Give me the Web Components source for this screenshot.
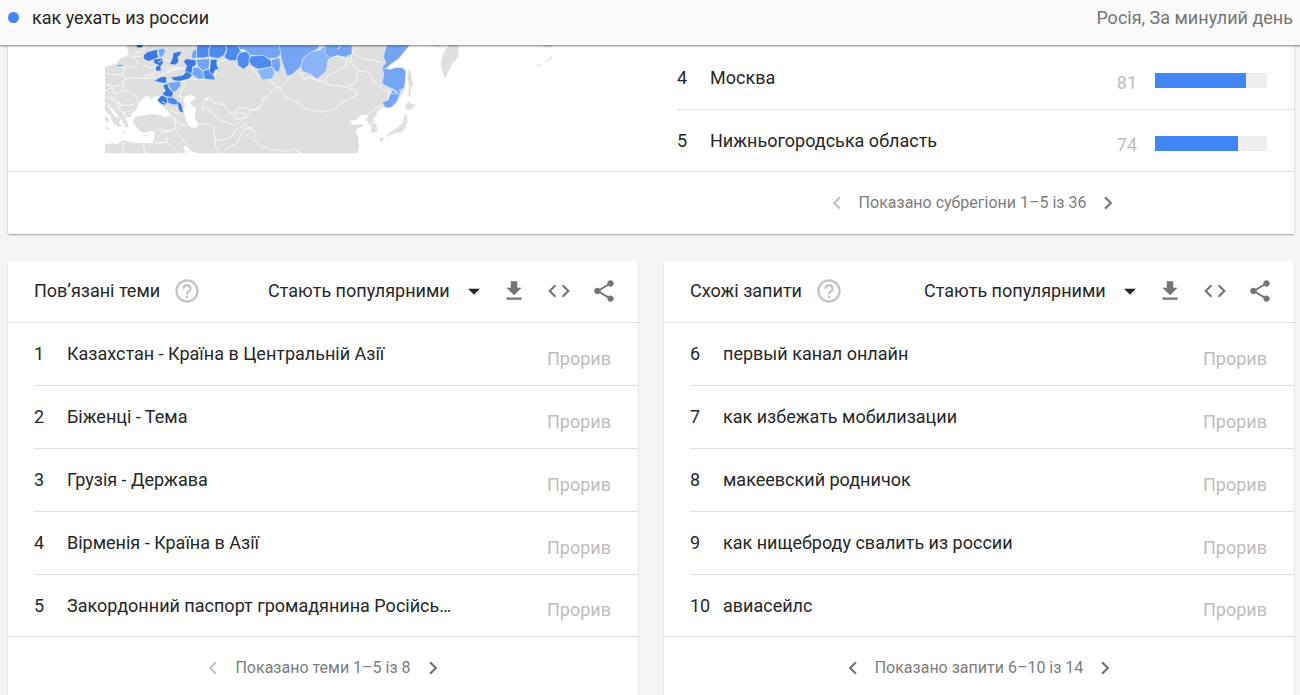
<!DOCTYPE html>
<html lang="uk">
<head>
<meta charset="utf-8">
<meta name="viewport" content="width=device-width, initial-scale=1">
<title>Google Trends</title>
<style>
  body { margin: 0; background: #f5f5f5; color: #262626; font: 18px/24px Roboto, "Noto Sans", sans-serif; }
</style>
</head>
<body>
<trends-page></trends-page>

<script>
const define = (name, html, setup) => {
  const template = document.createElement('template');
  template.innerHTML = html;
  customElements.define(name, class extends HTMLElement {
    connectedCallback() {
      if (this.shadowRoot) return;
      this.attachShadow({ mode: 'open' }).append(template.content.cloneNode(true));
      if (setup) setup(this, this.shadowRoot);
    }
  });
};

const ICONS = {
  download: 'M19 9h-4V3H9v6H5l7 7 7-7zM5 18v2h14v-2H5z',
  code: 'M9.4 16.6 4.8 12l4.6-4.6L8 6l-6 6 6 6 1.400-1.400zm5.200 0 4.600-4.600-4.600-4.600L16 6l6 6-6 6-1.400-1.400z',
  share: 'M18 16.080c-.76 0-1.440.3-1.960.77L8.910 12.700c.05-.23.09-.46.09-.7s-.04-.47-.09-.7l7.050-4.110c.54.5 1.250.81 2.040.81 1.660 0 3-1.340 3-3s-1.340-3-3-3-3 1.340-3 3c0 .24.04.47.09.7L8.040 9.810C7.500 9.310 6.790 9 6 9c-1.660 0-3 1.340-3 3s1.340 3 3 3c.79 0 1.500-.31 2.040-.81l7.120 4.160c-.05.21-.08.43-.08.65 0 1.610 1.310 2.920 2.920 2.920s2.920-1.310 2.920-2.920-1.310-2.920-2.920-2.920z',
  help: 'M11 18h2v-2h-2v2zm1-16C6.480 2 2 6.480 2 12s4.480 10 10 10 10-4.480 10-10S17.520 2 12 2zm0 18c-4.410 0-8-3.590-8-8s3.590-8 8-8 8 3.590 8 8-3.590 8-8 8zm0-14c-2.210 0-4 1.790-4 4h2c0-1.100.9-2 2-2s2 .9 2 2c0 2-3 1.750-3 5h2c0-2.250 3-2.500 3-5 0-2.210-1.790-4-4-4z',
  prev: 'M15.410 7.410 14 6l-6 6 6 6 1.410-1.410L10.830 12z',
  next: 'M10 6 8.590 7.410 13.170 12l-4.580 4.590L10 18l6-6z',
  drop: 'M6.500 10l5.500 5.500 5.500-5.500z'
};

define('trend-icon', `
  <style>
    :host { display: block; width: 26px; height: 26px; }
    svg { display: block; width: 100%; height: 100%; fill: currentColor; }
  </style>
  <svg viewBox="0 0 24 24" aria-hidden="true"><path/></svg>`,
  (host, root) => root.querySelector('path').setAttribute('d', ICONS[host.getAttribute('name')]));

define('icon-button', `
  <style>
    :host { display: block; color: #757575; }
    :host([muted]) { color: #c4c4c4; }
    button { display: block; padding: 0; border: 0; background: none; color: inherit; cursor: pointer; }
  </style>
  <button type="button"></button>`,
  (host, root) => {
    const button = root.querySelector('button');
    button.setAttribute('aria-label', host.getAttribute('label'));
    const icon = document.createElement('trend-icon');
    icon.setAttribute('name', host.getAttribute('name'));
    if (host.getAttribute('name') === 'help') icon.style.cssText = 'width:28px;height:28px';
    button.append(icon);
  });

define('query-bar', `
  <style>
    :host { position: sticky; top: 0; z-index: 1; display: flex; align-items: center; box-sizing: border-box;
      height: 45px; padding: 0 7px 10px 8px; background: #fafafa; box-shadow: 0 1px 2px rgba(0,0,0,.5); }
    i { flex: none; width: 11px; height: 11px; margin-right: 13px; border-radius: 50%; background: #4285f4; }
    .scope { margin-left: auto; color: #757575; }
  </style>
  <i></i><slot></slot><span class="scope"><slot name="scope"></slot></span>`);

define('trend-row', `
  <style>
    :host { display: flex; align-items: center; box-sizing: border-box; height: 63px; margin-left: 26px;
      padding-right: 27px; border-bottom: 1px solid #e0e0e0; }
    :host(:last-of-type) { height: 61px; border-bottom: 0; }
    .rank { flex: none; width: 33px; }
    .name { flex: 1; min-width: 0; overflow: hidden; white-space: nowrap; text-overflow: ellipsis; }
    .value { padding-top: 9px; color: #bdbdbd; }
    .bar { width: 112px; height: 15px; margin: 5px 0 0 18px; background: #eee; }
    .bar div { height: 100%; background: #4285f4; }
  </style>
  <span class="rank"></span><span class="name"><slot></slot></span><span class="value"></span>`,
  (host, root) => {
    host.setAttribute('role', 'listitem');
    const value = host.getAttribute('value');
    root.querySelector('.rank').textContent = host.getAttribute('rank');
    root.querySelector('.value').textContent = value;
    if (host.hasAttribute('bar')) {
      const bar = document.createElement('div');
      bar.className = 'bar';
      bar.append(document.createElement('div'));
      bar.firstChild.style.width = value + '%';
      root.append(bar);
    }
  });

define('trend-pager', `
  <style>
    :host { display: flex; align-items: center; justify-content: center; gap: 9px; height: 62px;
      border-top: 1px solid #e0e0e0; color: #7d7d7d; font-size: 16px; }
    :host([half]) { padding-left: 50%; }
  </style>
  <icon-button class="prev" name="prev" label="Назад"></icon-button>
  <span><slot></slot></span>
  <icon-button name="next" label="Далі"></icon-button>`,
  (host, root) => {
    if (host.hasAttribute('first')) root.querySelector('.prev').setAttribute('muted', '');
  });

define('trend-card', `
  <style>
    :host { display: block; background: #fff; border-radius: 2px; box-shadow: 0 1px 2px rgba(0,0,0,.2); }
    header { display: flex; align-items: center; box-sizing: border-box; height: 62px; padding: 0 21px 2px 26px;
      border-bottom: 1px solid #e0e0e0; }
    h2 { margin: 0 13px 0 0; font: inherit; white-space: nowrap; }
    label { display: grid; align-items: center; margin: 0 14px 0 auto; }
    select { grid-area: 1 / 1; appearance: none; margin: 0; padding: 0 37px 0 0; border: 0; background: none;
      color: inherit; font: inherit; }
    label trend-icon { grid-area: 1 / 1; justify-self: end; pointer-events: none; }
    nav { display: flex; gap: 19px; }
  </style>
  <header>
    <h2></h2>
    <icon-button name="help" label="Довідка" muted></icon-button>
    <label>
      <select aria-label="Сортування"><option>Стають популярними</option></select>
      <trend-icon name="drop"></trend-icon>
    </label>
    <nav>
      <icon-button name="download" label="Завантажити"></icon-button>
      <icon-button name="code" label="Вставити"></icon-button>
      <icon-button name="share" label="Поділитися"></icon-button>
    </nav>
  </header>
  <div role="list"><slot></slot></div>
  <slot name="pager"></slot>`,
  (host, root) => root.querySelector('h2').textContent = host.getAttribute('heading'));

define('region-map', `
  <style>
    :host { display: block; }
    svg { display: block; width: 455px; max-width: 100%; }
    .land { fill: #dfdfdf; }
    .sea { fill: #fff; }
    .line { fill: none; stroke: #f8f8f8; stroke-width: 3; stroke-linejoin: round; }
    .area path { stroke: #dbe8fd; stroke-width: 2; stroke-linejoin: round; }
    .a { fill: #174ea6; } .b { fill: #3b78dc; } .c { fill: #4f8bee; } .d { fill: #74a5f5; } .e { fill: #8ab4f8; }
  </style>
  <svg viewBox="45 27 1365 326" role="img" aria-label="Популярність за субрегіонами">
    <g class="land">
      <path d="M45 27H960L925 68 895 92 885 102 900 112 912 95 930 95 945 100 948 125 944 158 930 185 915 205 895 217 878 214 862 226 862 234 848 250 858 264 864 284 848 292 842 286 846 272 836 264 828 250 836 240 824 236 812 238 798 252 778 255 790 268 812 264 822 268 800 280 798 292 806 304 804 316 808 332 802 352H322L304 346 290 330 281 330 286 352H45V326L66 322 80 324 100 312 130 320 162 322 188 322 194 304 195 288 184 284 165 290 150 286 134 268 128 252 136 242 160 238 184 234 205 236 225 244 243 238 232 226 212 210 196 200 184 206 168 196 152 204 138 222 124 234 122 244 104 244 112 256 116 276 104 272 98 258 88 244 78 230 68 218 52 206 66 230 76 242 66 244 52 232 45 222Z"/>
      <path d="M1077 27h28l-1 18 4 9-8 15-14 14-8 18-13 26-6-17-6-14 2-28 8-22zM955 100l7 8 3 22 6 18-8 8-2 26-6-2 2-30-4-24zM946 206l10-10 8 8 14 2-8 9-12 7-10-4zM942 238l9-2 1 22-7 18-10 12-16 3-16 5-9-4 18-10 16-12 10-10zM870 304l12 2-6 15-6-7zM888 298l16-4-8 9zM1020 27h28v5l-16-2zM1338 88l14-4 2 3-12 4zM1360 80l14-9 14-14-3 10-14 10zM1358 27h26v8l-26-4z"/>
      <path d="M1342 27h4v3zM1250 118h4v3zM1264 118h4v3zM1122 68h3v3z"/>
    </g>
    <g class="sea">
      <path d="M45 27H108L116 48 108 62 92 66 78 84 58 88 45 92Z"/>
      <path d="M138 222 150 196 162 182 178 180 182 190 198 178 208 184 200 196 214 208 232 224 242 238 224 240 200 230 184 234 160 236 146 236Z"/>
      <path d="M284 182 300 177 316 182 313 192 300 196 308 212 318 216 316 232 314 248 324 262 320 276 302 274 290 258 286 240 278 222 286 210 280 194Z"/>
      <path d="M45 228 64 240 76 262 96 274 120 280 138 276 160 292 184 286 196 292 186 320 156 318 128 316 100 308 78 320 58 316 45 318Z"/>
      <path d="M342 190 352 184 358 188 350 194Z"/>
    </g>
    <g class="land"><path d="M70 262 62 244 74 242 92 248 88 262 98 274 80 270zM92 288l14 2-2 4zM158 298l16-4-8 8zM45 236l14 18-6 6-8-8zM46 272l12 4-2 6-10-4z"/></g>
    <g class="line">
      <path d="M112 58 132 64 145 80 132 94 108 94 98 110 104 128 98 148 104 160M78 90l26 6M45 112l54 6M104 128l28-2 40 2 22-8 8 18 22 6 6 18-12 12-18 12M45 146l30 4 26-2M45 166l22-12 8 22 24-12 20 2 18 12 8 18-12 8-22 4-18 0-20-22-18 2-12-12M60 178l10 16 18 12-12 14M92 202l-4 20 14 8 26-8M100 228l4 14M45 198l16 10M234 240l20 6 6 14 30 10M252 245l6 30-14 10-48-4M200 306l18-16 24-6M192 322l38-4 24 20 12 14M256 280l18 26 18 22M232 302l-2 16-24 4M100 318v34M160 322l4 30M244 224l18 8 14-4 10 8"/>
      <path d="M164 54 150 62 130 60M136 50l22-4 10-14M208 90l-16 22-30 8M160 86l18 10 22-4M222 70l20 6M232 96l40 0 22 4M232 106l32-10M202 122l40-16 40-10"/>
      <path d="M275 162 286 148 278 138 304 126 318 132 340 130 372 132 378 112 382 82 404 72 440 74 460 96 482 92 506 122 540 132 558 152 546 164 534 182 520 188 514 210 484 226 462 242 456 252 470 272 490 282 500 296 488 306 510 328 540 340 590 346 614 338 634 352M275 162 268 182 280 184M338 226l0-26 18-18 16 20 30 4 16 26 20-2 4-14 24 0 12 4 30 2M338 212l24 14 10 10 18 16 22 8 20 8 22-12M322 268l26 -6 22 10 6 38 0 20 14 22M376 312l28 0 22-10 12-22 26-10M402 345l16-12 22-8 12-26 10-20 26-4M464 290l14 18M430 240l26-12 16 16-34 6-8-10"/>
      <path d="M556 152 570 156 592 132 614 106 634 110 640 130 658 124 680 132 702 138 714 146 750 150 770 154 796 140 804 104 832 108 842 122 862 146 888 166 898 162 888 216M570 156l20 30 34 14 26 20 46 8 40-10 18-16 26-14 22-10-6-16-20-2 4-14M702 138l12-20 28-14 16-10 8 0 4-24-24-10-32 4M770 48l20 0 10-20M786 84l20 18M786 56l-6 26M790 48l20 18 40 8 28 6M832 236l18-14 26-14M836 264l24-4"/>
    </g>
    <g class="area">
      <path class="a" d="M138 27h22l-4 8-14 0z"/><path class="a" d="M180 27h6l-2 4z"/>
      <path class="b" d="M160 58 172 48 192 42 204 40 202 54 206 64 194 70 176 76 162 70Z"/>
      <path class="d" d="M204 40 222 36 226 46 218 62 208 64Z"/>
      <path class="b" d="M190 70 216 66 220 82 212 90 214 104 198 106 196 92 206 88 192 82Z"/>
      <path class="b" d="M250 50 274 45 272 56 264 62 266 78 256 87 238 85 246 70Z"/>
      <path class="c" d="M80 87l16-2 3 5-18 2z"/>
      <path class="d" d="M304 58 310 42 320 40 322 66 306 68Z"/>
      <path class="b" d="M280 76 290 68 318 72 318 88 308 92 306 112 292 114 284 106 290 90Z"/>
      <path class="b" d="M192 134 214 122 230 122 230 140 220 142 204 138Z"/>
      <path class="b" d="M242 124 278 118 290 106 308 116 298 128 270 136 252 134Z"/>
      <path class="d" d="M232 140 270 136 272 150 258 166 248 168 238 154Z"/>
      <path class="b" d="M218 148 232 142 238 158 250 170 246 184 228 182 216 174 226 164Z"/>
      <path class="b" d="M202 192 214 178 228 182 234 196 224 208 210 202Z"/>
      <path class="c" d="M230 184 248 184 264 194 266 206 246 206 234 200Z"/>
      <path class="b" d="M262 194 274 204 278 218 281 232 268 226 264 214Z"/>
      <path class="c" d="M320 27H362L356 42 358 62 340 66 320 66Z"/>
      <path class="c" d="M362 27H408L410 40 402 58 384 68 358 62 356 42Z"/>
      <path class="d" d="M318 70 360 68 358 84 356 98 338 104 324 92Z"/>
      <path class="d" d="M308 94 324 94 338 104 344 128 326 130 306 116Z"/>
      <path class="c" d="M338 106 356 98 362 108 372 120 376 132 344 130Z"/>
      <path class="b" d="M362 70 382 70 380 84 386 98 374 104 370 116 358 108Z"/>
      <path class="c" d="M408 27H448L456 44 444 54 440 74 418 74 402 64 410 44Z"/>
      <path class="c" d="M448 50 468 46 480 58 476 88 460 100 444 88 440 68Z"/>
      <path class="d" d="M442 27H570L574 52 560 66 538 68 520 60 482 58 466 42 450 40Z"/>
      <path class="c" d="M482 60 520 58 544 74 546 92 528 96 504 100 484 88 476 74Z"/>
      <path class="e" d="M502 102 530 96 548 92 554 112 546 128 516 132Z"/>
      <path class="d" d="M544 72 568 64 572 84 568 108 556 106 546 92Z"/>
      <path class="d" d="M568 27H690L680 42 660 50 640 66 632 92 606 116 592 120 584 100 574 70Z"/>
      <path class="e" d="M640 66 662 48 690 42 706 27H724V64L714 72 710 102 682 130 660 114 636 106 632 90Z"/>
      <path class="d" d="M706 27H786V54L766 64 742 58 720 66 704 50Z"/>
      <path class="d" d="M890 27H959L926 68 898 88 884 102 876 94 888 80 880 62Z"/>
      <path class="d" d="M876 96 902 100 918 94 940 96 948 108 944 152 924 170 908 158 888 150 876 140 882 114Z"/>
      <path class="d" d="M906 160l14 12 10-12 2 10-8 8-20-4z"/>
      <path class="d" d="M902 172 930 174 920 198 904 214 888 216 876 200 894 192Z"/>
    </g>
    <circle class="sea" cx="920" cy="89" r="6"/>
    <path class="line" d="M206 78l8-4M216 196l10 6M448 42l18 4M744 40l8-13"/>
  </svg>`);

define('region-card', `
  <style>
    :host { display: block; background: #fff; border-radius: 0 0 2px 2px; box-shadow: 0 1px 2px rgba(0,0,0,.36); }
    .body { display: grid; grid-template-columns: 1fr 1fr; }
    region-map { margin-left: 97px; }
    .list { padding-top: 2px; }
  </style>
  <div class="body">
    <region-map></region-map>
    <div class="list" role="list"><slot></slot></div>
  </div>
  <slot name="pager"></slot>`);

define('trends-page', `
  <style>
    :host { display: block; }
    main { display: grid; gap: 27px; padding: 0 6px 0 8px; }
    .pair { display: grid; grid-template-columns: 1fr 1fr; gap: 26px; }
  </style>
  <query-bar>как уехать из россии<span slot="scope">Росія, За минулий день</span></query-bar>
  <main>
    <region-card>
      <trend-row rank="4" value="81" bar>Москва</trend-row>
      <trend-row rank="5" value="74" bar>Нижньогородська область</trend-row>
      <trend-pager slot="pager" half first>Показано субрегіони 1–5 із 36</trend-pager>
    </region-card>
    <div class="pair">
      <trend-card heading="Пов’язані теми">
        <trend-row rank="1" value="Прорив">Казахстан - Країна в Центральній Азії</trend-row>
        <trend-row rank="2" value="Прорив">Біженці - Тема</trend-row>
        <trend-row rank="3" value="Прорив">Грузія - Держава</trend-row>
        <trend-row rank="4" value="Прорив">Вірменія - Країна в Азії</trend-row>
        <trend-row rank="5" value="Прорив">Закордонний паспорт громадянина Російсь…</trend-row>
        <trend-pager slot="pager" first>Показано теми 1–5 із 8</trend-pager>
      </trend-card>
      <trend-card heading="Схожі запити">
        <trend-row rank="6" value="Прорив">первый канал онлайн</trend-row>
        <trend-row rank="7" value="Прорив">как избежать мобилизации</trend-row>
        <trend-row rank="8" value="Прорив">макеевский родничок</trend-row>
        <trend-row rank="9" value="Прорив">как нищеброду свалить из россии</trend-row>
        <trend-row rank="10" value="Прорив">авиасейлс</trend-row>
        <trend-pager slot="pager">Показано запити 6–10 із 14</trend-pager>
      </trend-card>
    </div>
  </main>`);
</script>
</body>
</html>
